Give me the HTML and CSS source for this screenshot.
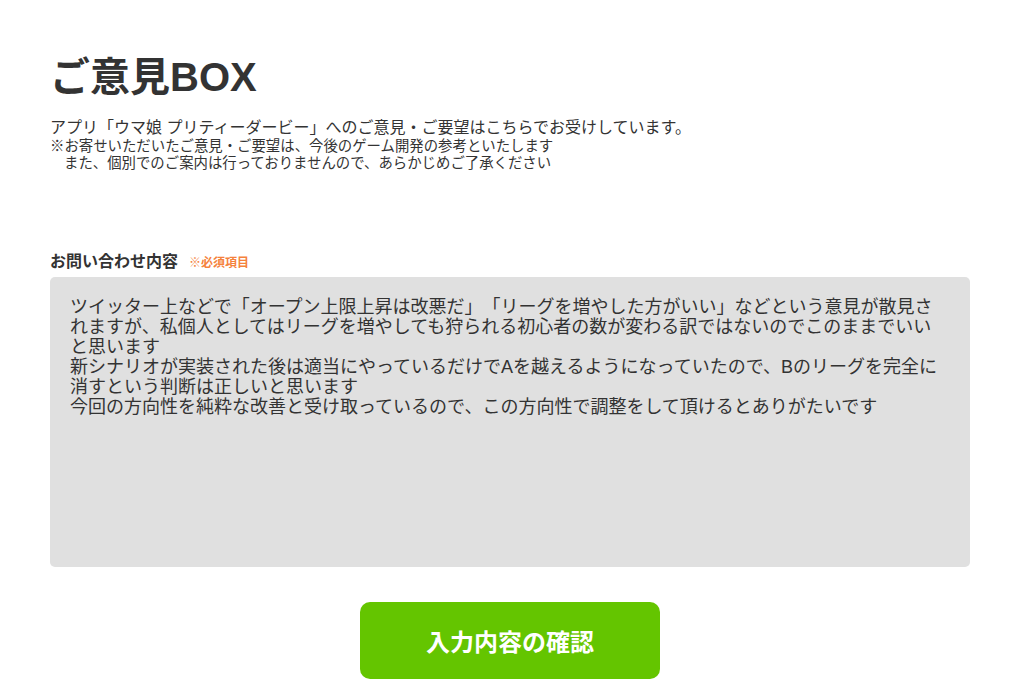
FILE: index.html
```html
<!DOCTYPE html>
<html lang="ja">
<head>
    <meta charset="UTF-8">
    <meta name="viewport" content="width=device-width, initial-scale=1.0">
    <title>ご意見BOX</title>
    <link rel="stylesheet" href="styles.css">
</head>
<body>
    <main class="page">
        <h1 class="title">ご意見BOX</h1>
        <p class="lead">アプリ「ウマ娘 プリティーダービー」へのご意見・ご要望はこちらでお受けしています。</p>
        <p class="note">
            ※お寄せいただいたご意見・ご要望は、今後のゲーム開発の参考といたします<br>
            <span class="note-indent">また、個別でのご案内は行っておりませんので、あらかじめご了承ください</span>
        </p>

        <form class="form" onsubmit="return false;">
            <div class="field">
                <label class="label" for="opinion">お問い合わせ内容<span class="required">※必須項目</span></label>
                <textarea class="textarea" id="opinion" name="opinion">ツイッター上などで「オープン上限上昇は改悪だ」「リーグを増やした方がいい」などという意見が散見されますが、私個人としてはリーグを増やしても狩られる初心者の数が変わる訳ではないのでこのままでいいと思います
新シナリオが実装された後は適当にやっているだけでAを越えるようになっていたので、Bのリーグを完全に消すという判断は正しいと思います
今回の方向性を純粋な改善と受け取っているので、この方向性で調整をして頂けるとありがたいです</textarea>
            </div>
            <div class="actions">
                <button class="submit" type="submit">入力内容の確認</button>
            </div>
        </form>
    </main>
</body>
</html>
```

FILE: styles.css
```css
body {
    margin: 0;
    background: #fff;
    color: #333;
    font-family: "Liberation Sans", "Noto Sans CJK JP", sans-serif;
    text-spacing-trim: space-all;
}
.page {
    width: 920px;
    padding: 53px 0 0 50px;
}
.title {
    margin: 0;
    font-size: 40px;
    line-height: 48px;
    font-weight: bold;
}
.lead {
    margin: 17px 0 0;
    font-size: 16px;
    line-height: 20px;
}
.note {
    margin: 0;
    font-size: 14.4px;
    line-height: 17px;
}
.note-indent {
    padding-left: 14px;
}
.form {
    margin-top: 80px;
}
.field {
    display: flex;
    flex-direction: column;
    gap: 4px;
}
.label {
    display: flex;
    align-items: baseline;
    gap: 11px;
    font-size: 16px;
    line-height: 20px;
    font-weight: bold;
}
.required {
    font-size: 12px;
    color: #f5823c;
}
.textarea {
    box-sizing: border-box;
    width: 920px;
    height: 290px;
    margin: 0;
    padding: 20px 30px 20px 20px;
    border: none;
    border-radius: 5px;
    background: #e0e0e0;
    color: #333;
    font-family: "Liberation Sans", "Noto Sans CJK JP", sans-serif;
    font-size: 18px;
    line-height: 20px;
    text-spacing-trim: space-all;
    resize: none;
    outline: none;
}
.actions {
    display: flex;
    justify-content: center;
    margin-top: 35px;
}
.submit {
    width: 300px;
    height: 77px;
    border: none;
    border-radius: 10px;
    background: #64c500;
    color: #fff;
    font-family: "Liberation Sans", "Noto Sans CJK JP", sans-serif;
    font-size: 24px;
    font-weight: bold;
    cursor: pointer;
}
```
